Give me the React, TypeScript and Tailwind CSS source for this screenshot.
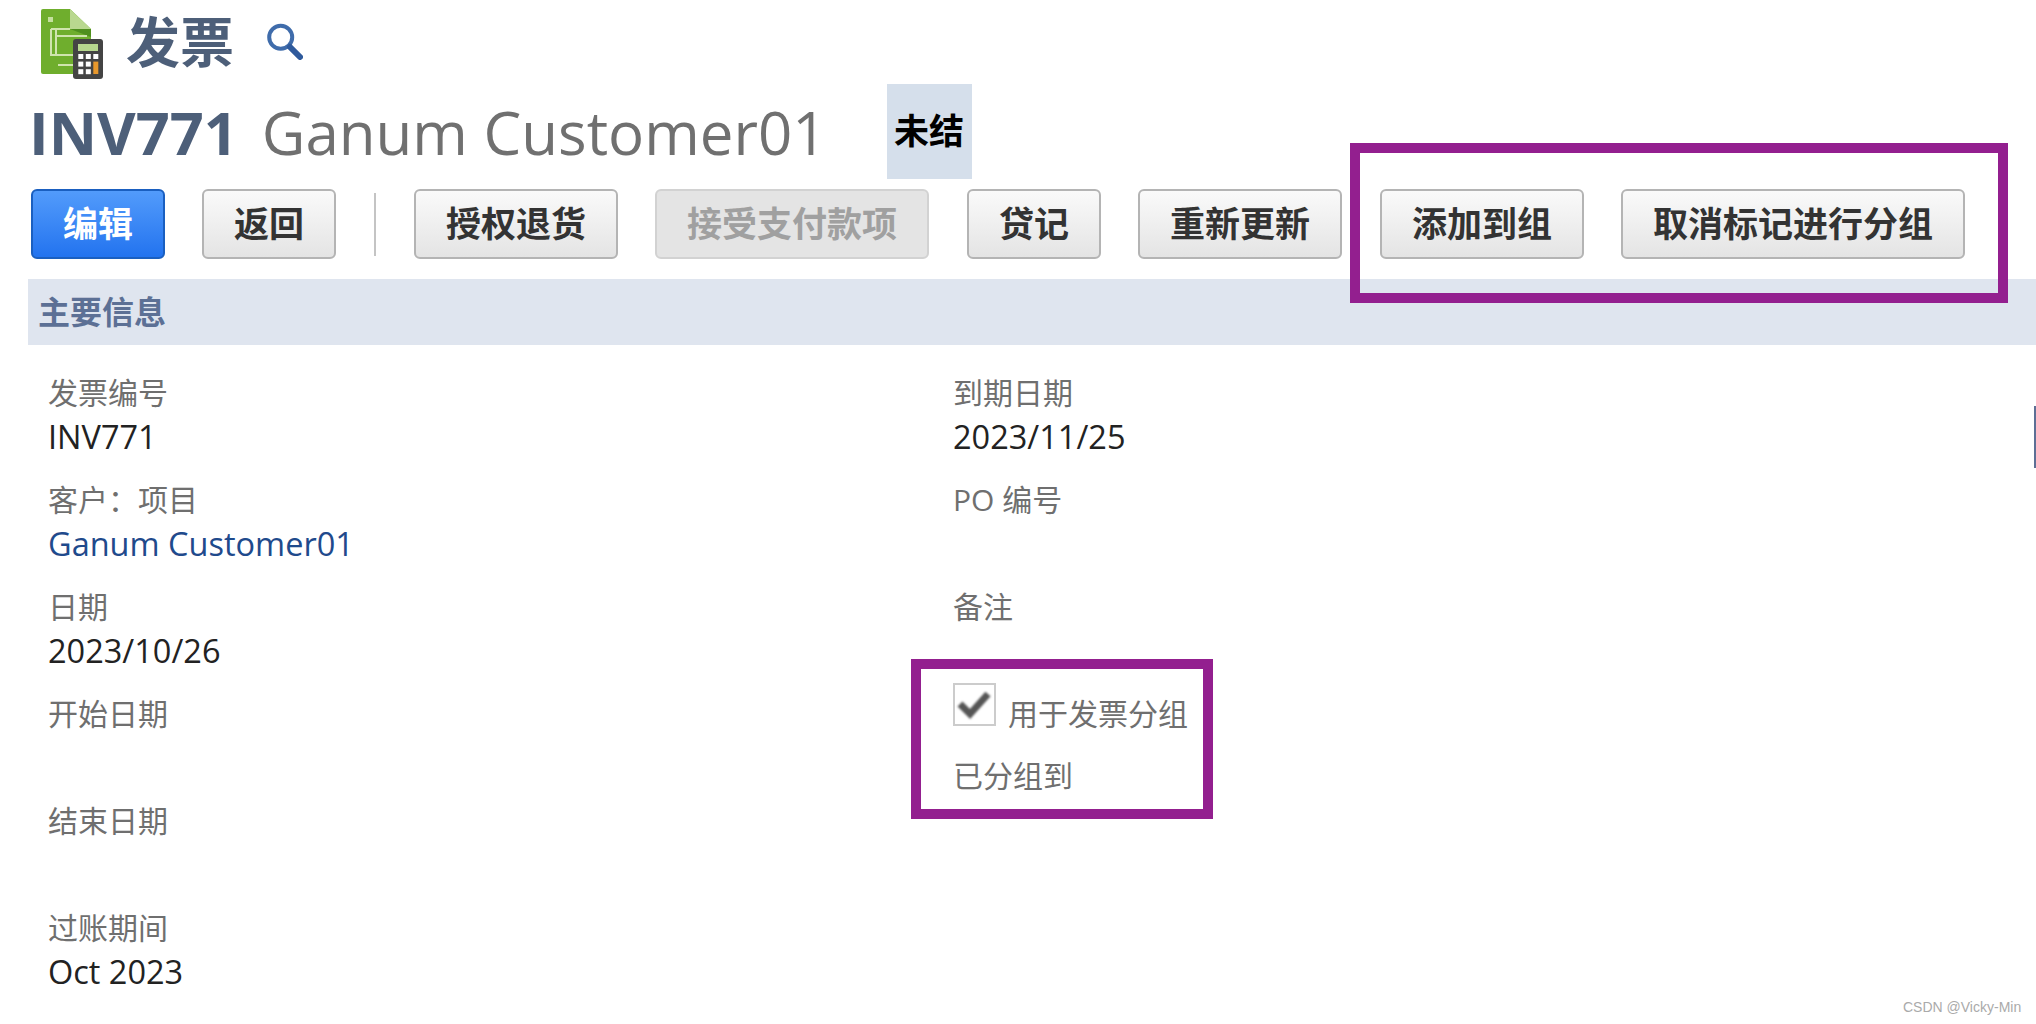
const latin = "font-['Open_Sans','Noto_Sans_CJK_SC',sans-serif]";

const InvoiceIcon = () => (
  <svg width="64" height="72" viewBox="0 0 64 72" className="mt-[4px] shrink-0">
    <path d="M3 1 H30 L51 21 V66 H3 Q1 66 1 64 V3 Q1 1 3 1 Z" fill="#6fae2d" />
    <path d="M30 1 L51 21 H30 Z" fill="#b9d88f" />
    <path d="M30 21 H51 V29 Z" fill="#4f8f1e" />
    <rect x="8" y="9" width="5" height="5" fill="#c5e09f" />
    <path d="M11 21 H30 M11 21 V47 H33 M16 21 V47 M16 28 H47" stroke="#cfe4ae" strokeWidth="2" fill="none" />
    <rect x="18" y="56" width="15" height="2" fill="#cfe4ae" />
    <rect x="33" y="31" width="30" height="40" rx="3" fill="#444" />
    <rect x="38" y="36" width="20" height="7" fill="#b7d78e" />
    {[0, 1, 2].map(r =>
      [0, 1, 2].map(c =>
        r > 0 && c === 2 ? null : (
          <rect key={`${r}-${c}`} x={38.3 + c * 7.5} y={46 + r * 7.6} width="5" height="5" fill="#fff" />
        )
      )
    )}
    <rect x="53.3" y="53.6" width="5" height="12.4" fill="#e8982c" />
  </svg>
);

const SearchIcon = () => (
  <svg width="38" height="38" viewBox="0 0 38 38" className="shrink-0 blur-[0.5px]">
    <circle cx="15.7" cy="14.3" r="11.5" fill="none" stroke="#3f6cab" strokeWidth="4" />
    <path d="M25 24 L35 34" stroke="#2f5a9c" strokeWidth="6" strokeLinecap="round" />
  </svg>
);

const Btn = ({ label, w, kind = 'default' }: { label: string; w: string; kind?: 'default' | 'primary' | 'disabled' }) => {
  const look =
    kind === 'primary'
      ? 'border-[#1a5fc0] bg-gradient-to-b from-[#529bfb] to-[#2273ef] text-white'
      : kind === 'disabled'
        ? 'border-[#d2d2d2] bg-[#e4e4e4] text-[#a0a0a0]'
        : 'border-[#b4b4b4] bg-gradient-to-b from-[#fafafa] to-[#e4e4e4] text-[#333]';
  return (
    <button className={`${w} h-[70px] shrink-0 rounded-[6px] border-2 text-[35px] font-bold ${look}`}>
      {label}
    </button>
  );
};

const Field = ({ label, value, link }: { label: string; value?: string; link?: boolean }) => (
  <div className="h-[107px]">
    <div className="h-[44px] text-[30px] leading-[44px] text-[#6f6f6f]">{label}</div>
    {value && (
      <div className={`text-[32.5px] leading-[44px] ${link ? 'text-[#1f4a8c]' : 'text-[#222]'}`}>{value}</div>
    )}
  </div>
);

export default function App() {
  return (
    <div className={`${latin} relative h-[1024px] w-[2036px] overflow-hidden bg-white`}>
      <div className="flex h-[84px] items-center pl-[40px]">
        <InvoiceIcon />
        <h1 className="ml-[22px] text-[54px] font-bold leading-none text-[#4d5f79]">发票</h1>
        <div className="ml-[31px]">
          <SearchIcon />
        </div>
      </div>

      <div className="flex h-[95px] items-center pl-[29px]">
        <span className="text-[59.5px] font-bold leading-none text-[#4d5f79]">INV771</span>
        <span className="ml-[24px] text-[60px] leading-none text-[#707070]">Ganum Customer01</span>
        <span className="ml-[60px] flex h-[95px] w-[85px] items-center justify-center bg-[#d5dfeb] text-[35px] font-bold text-black">
          未结
        </span>
      </div>

      <div className="mt-[10px] flex items-center pl-[31px]">
        <Btn label="编辑" w="w-[134px]" kind="primary" />
        <Btn label="返回" w="ml-[37px] w-[134px]" />
        <div className="ml-[38px] h-[63px] w-[2px] bg-[#c4c4c4]" />
        <Btn label="授权退货" w="ml-[38px] w-[204px]" />
        <Btn label="接受支付款项" w="ml-[37px] w-[274px]" kind="disabled" />
        <Btn label="贷记" w="ml-[38px] w-[134px]" />
        <Btn label="重新更新" w="ml-[37px] w-[204px]" />
        <Btn label="添加到组" w="ml-[38px] w-[204px]" />
        <Btn label="取消标记进行分组" w="ml-[37px] w-[344px]" />
      </div>

      <div className="ml-[28px] mt-[20px] flex h-[66px] items-center bg-[#dfe5ef] pl-[10px] text-[32px] font-bold text-[#5c7095]">
        主要信息
      </div>

      <div className="grid grid-cols-[905px_1fr] pl-[48px] pt-[26px]">
        <div>
          <Field label="发票编号" value="INV771" />
          <Field label="客户：项目" value="Ganum Customer01" link />
          <Field label="日期" value="2023/10/26" />
          <Field label="开始日期" />
          <Field label="结束日期" />
          <Field label="过账期间" value="Oct 2023" />
        </div>
        <div>
          <Field label="到期日期" value="2023/11/25" />
          <Field label="PO 编号" />
          <Field label="备注" />
          <div className="-mt-[9px] flex h-[71px] items-start">
            <span className="h-[43px] w-[43px] shrink-0 border-2 border-[#cccccc]">
              <svg width="39" height="39" viewBox="0 0 39 39" className="blur-[1px]">
                <path d="M5 19 L15 29 L33 9" fill="none" stroke="#555" strokeWidth="7" />
              </svg>
            </span>
            <span className="ml-[12px] mt-[11px] text-[30px] leading-[40px] text-[#6f6f6f]">用于发票分组</span>
          </div>
          <div className="text-[30px] leading-[44px] text-[#6f6f6f]">已分组到</div>
        </div>
      </div>

      {/* annotation frames drawn over the page */}
      <div className="absolute left-[1350px] top-[143px] h-[160px] w-[658px] border-[10px] border-[#931f8f]" />
      <div className="absolute left-[911px] top-[659px] h-[160px] w-[302px] border-[10px] border-[#931f8f]" />
      <div className="absolute right-0 top-[406px] h-[62px] w-[2px] bg-[#5d6f95]" />
      <div className="absolute left-[1903px] top-[999px] font-['Liberation_Sans',sans-serif] text-[14px] leading-[16px] text-[#aaaaaa]">
        CSDN @Vicky-Min
      </div>
    </div>
  );
}
